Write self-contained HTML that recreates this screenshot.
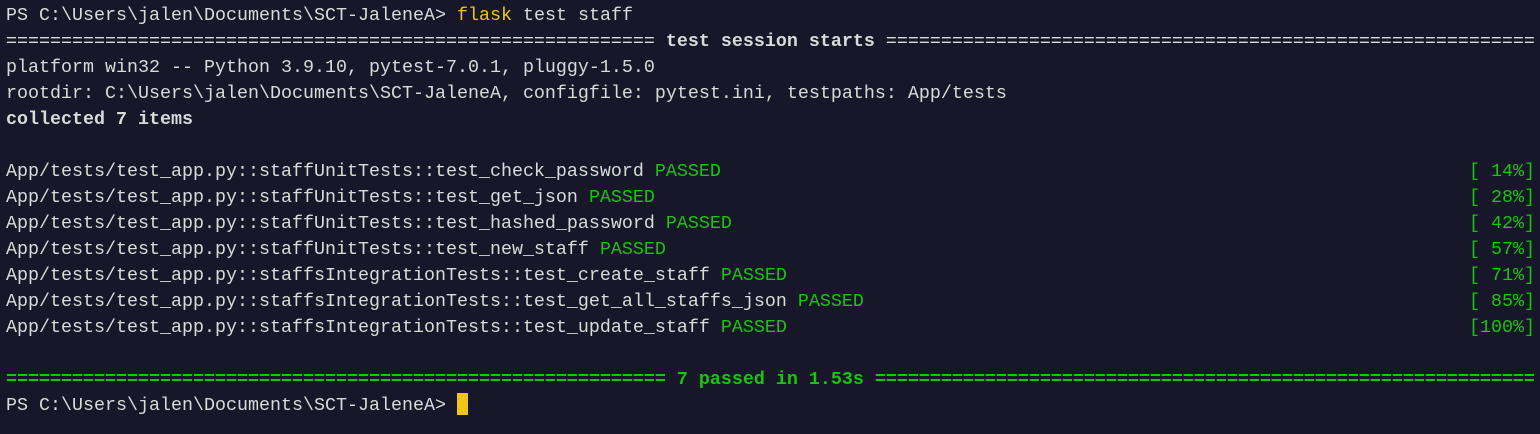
<!DOCTYPE html>
<html><head><style>
html,body{margin:0;padding:0;background:#171729;width:1540px;height:434px;overflow:hidden}
pre{margin:0;position:absolute;left:6px;top:3px;font-family:"Liberation Mono",monospace;font-size:18.33px;line-height:26px;color:#dadada;width:1529px}
.l{display:flex;justify-content:space-between;height:26px;white-space:pre}
.g{color:#16c60c}.y{color:#f0c419}.b{font-weight:bold}
.cur{display:inline-block;width:11px;height:22px;background:#f0c419;vertical-align:-5px}
</style></head><body><pre><div class="l"><span>PS C:\Users\jalen\Documents\SCT-JaleneA&gt; <span class="y">flask</span> test staff</span></div><div class="l"><span>=========================================================== <b>test session starts</b> ===========================================================</span></div><div class="l"><span>platform win32 -- Python 3.9.10, pytest-7.0.1, pluggy-1.5.0</span></div><div class="l"><span>rootdir: C:\Users\jalen\Documents\SCT-JaleneA, configfile: pytest.ini, testpaths: App/tests</span></div><div class="l b"><span>collected 7 items</span></div><div class="l"><span> </span></div><div class="l"><span>App/tests/test_app.py::staffUnitTests::test_check_password <span class="g">PASSED</span></span><span class="g">[ 14%]</span></div><div class="l"><span>App/tests/test_app.py::staffUnitTests::test_get_json <span class="g">PASSED</span></span><span class="g">[ 28%]</span></div><div class="l"><span>App/tests/test_app.py::staffUnitTests::test_hashed_password <span class="g">PASSED</span></span><span class="g">[ 42%]</span></div><div class="l"><span>App/tests/test_app.py::staffUnitTests::test_new_staff <span class="g">PASSED</span></span><span class="g">[ 57%]</span></div><div class="l"><span>App/tests/test_app.py::staffsIntegrationTests::test_create_staff <span class="g">PASSED</span></span><span class="g">[ 71%]</span></div><div class="l"><span>App/tests/test_app.py::staffsIntegrationTests::test_get_all_staffs_json <span class="g">PASSED</span></span><span class="g">[ 85%]</span></div><div class="l"><span>App/tests/test_app.py::staffsIntegrationTests::test_update_staff <span class="g">PASSED</span></span><span class="g">[100%]</span></div><div class="l"><span> </span></div><div class="l g b"><span>============================================================ 7 passed in 1.53s ============================================================</span></div><div class="l"><span>PS C:\Users\jalen\Documents\SCT-JaleneA&gt; <span class="cur"></span></span></div></pre></body></html>
